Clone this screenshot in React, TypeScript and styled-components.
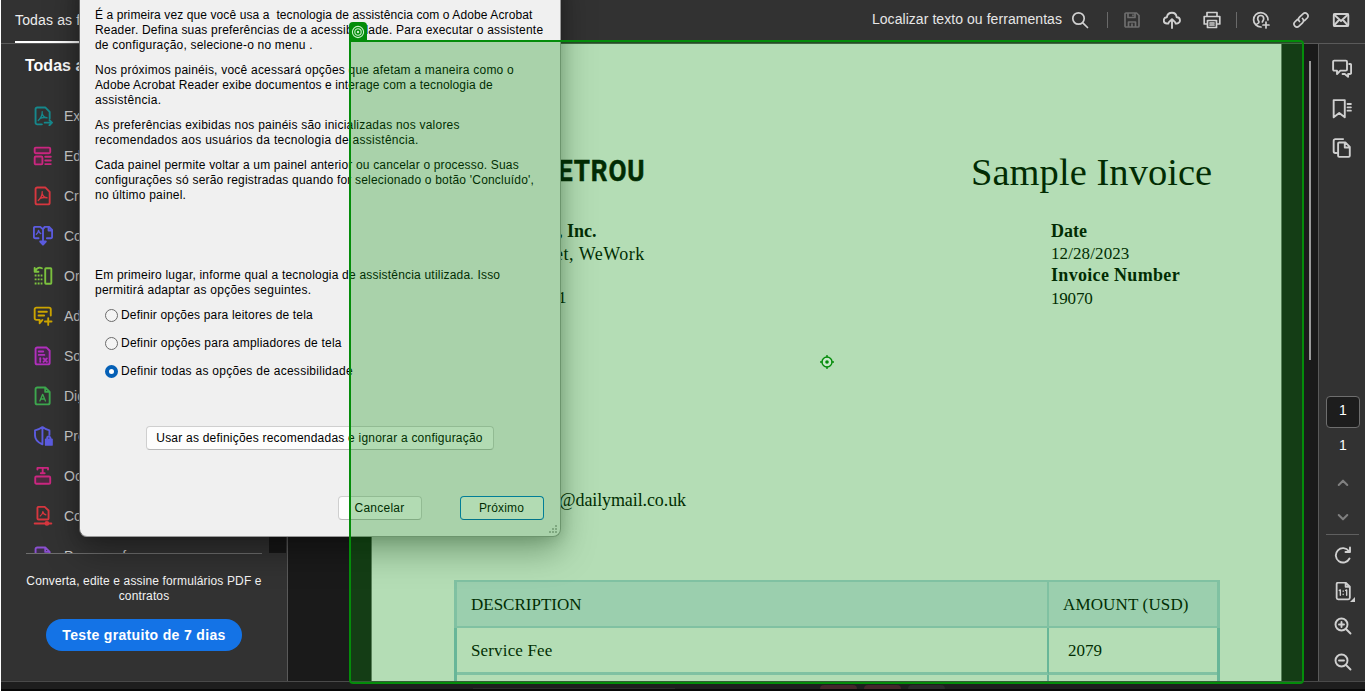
import React from 'react';
import styled, { createGlobalStyle } from 'styled-components';

const Global = createGlobalStyle`
  * { box-sizing: border-box; }
  body { margin: 0; background: #fff; overflow: hidden; font-family: "Liberation Sans", Arial, sans-serif; }
  p, h1, h2 { margin: 0; font-weight: normal; }
  button { font-family: inherit; padding: 0; }
`;

const Frame = styled.div`
  position: relative;
  width: 1364px;
  height: 691px;
  margin-left: 1px;
  overflow: hidden;
  display: flex;
  flex-direction: column;
  background: #1e1e1e;
`;

/* ---------- top bar ---------- */
const TopBar = styled.header`
  flex: 0 0 44px;
  display: flex;
  justify-content: space-between;
  background: #323232;
  border-bottom: 1px solid #5a5a5a;
`;
const Tab = styled.div`
  margin-left: 14px;
  width: 160px;
  height: 43px;
  padding-top: 11px;
  border-bottom: 2px solid #fff;
  color: #eee;
  font-size: 14px;
  line-height: 18px;
  letter-spacing: 0.15px;
  white-space: nowrap;
`;
const Tools = styled.div`
  display: flex;
  align-items: center;
  height: 40px;
  padding-right: 15px;
`;
const SearchLabel = styled.span`
  color: #e6e6e6;
  font-size: 14px;
  letter-spacing: 0.06px;
  margin-top: -2px;
  white-space: nowrap;
`;
const ToolIcon = styled.span<{ $gap: number; $dim?: boolean }>`
  display: flex;
  margin-left: ${p => p.$gap}px;
  color: ${p => (p.$dim ? '#6e6e6e' : '#d0d0d0')};
`;
const Separator = styled.i<{ $gap: number }>`
  width: 1px;
  height: 16px;
  margin-left: ${p => p.$gap}px;
  background: #6a6a6a;
`;

/* ---------- body ---------- */
const Body = styled.div`
  flex: 0 0 638px;
  display: flex;
  overflow: hidden;
  border-bottom: 1px solid #4a4a4a;
`;
const Sidebar = styled.aside`
  flex: 0 0 287px;
  display: flex;
  flex-direction: column;
  background: #323232;
  border-right: 1px solid #5a5a5a;
`;
const SideTitle = styled.h2`
  height: 52px;
  padding: 13px 0 0 24px;
  color: #fff;
  font-size: 16px;
  font-weight: bold;
  line-height: 18px;
`;
const ToolScroller = styled.div`
  display: flex;
  justify-content: space-between;
  height: 457px;
  padding-right: 1px;
  overflow: hidden;
`;
const ToolList = styled.div`
  width: 236px;
  margin-left: 25px;
`;
const ToolRow = styled.div`
  display: flex;
  align-items: center;
  height: 40px;
  padding-left: 7px;
  gap: 11px;
  color: #d0d0d0;
  font-size: 14px;
  white-space: nowrap;
`;
const ScrollTrack = styled.div`
  width: 17px;
  background: #171717;
`;
const Promo = styled.div`
  width: 236px;
  margin-left: 25px;
  border-top: 1px solid #6e6e6e;
  padding-top: 20px;
  display: flex;
  flex-direction: column;
  align-items: center;
  color: #f2f2f2;
  font-size: 12px;
  line-height: 15px;
  text-align: center;
`;
const PromoLine = styled.span`
  letter-spacing: 0.14px;
  white-space: nowrap;
`;
const TrialButton = styled.button`
  width: 196px;
  height: 32px;
  margin-top: 15px;
  border: 0;
  border-radius: 16px;
  background: #1473e6;
  color: #fff;
  font-size: 14px;
  font-weight: bold;
  line-height: 30px;
  letter-spacing: 0.33px;
`;

/* ---------- document ---------- */
const Viewer = styled.main`
  flex: 1;
  display: flex;
  justify-content: space-between;
  background: #1a1a1a;
`;
const Sheet = styled.article`
  width: 911px;
  margin-left: 83px;
  padding: 106px 61px 0 83px;
  border: solid #7a7a7a;
  border-width: 0 1px;
  background: #fff;
  color: #000;
  font-family: "Liberation Serif", "Times New Roman", serif;
  font-size: 17px;
  overflow: hidden;
`;
const SheetHead = styled.div`
  display: flex;
  justify-content: space-between;
  height: 70px;
  padding: 0 0 0 103px;
`;
const Brand = styled.h1`
  width: 100px;
  font: 700 30px/42px Roboto, sans-serif;
  letter-spacing: 1px;
  -webkit-text-stroke: 0.5px #000;
  transform: scaleX(0.87);
  transform-origin: left;
`;
const DocTitle = styled.h1`
  width: 249px;
  font-size: 38.5px;
  line-height: 44px;
  letter-spacing: 0.05px;
  white-space: nowrap;
`;
const Parties = styled.div`
  display: flex;
  justify-content: space-between;
  height: 262px;
`;
const Block = styled.div<{ $width: number; $left: number }>`
  width: ${p => p.$width}px;
  margin-left: ${p => p.$left}px;
`;
const Line = styled.p<{ $bold?: boolean; $indent?: number; $track?: number; $h?: number; $size?: number }>`
  height: ${p => p.$h ?? 22}px;
  line-height: 22px;
  padding-left: ${p => p.$indent ?? 0}px;
  letter-spacing: ${p => p.$track ?? 0}px;
  font-weight: ${p => (p.$bold ? 700 : 400)};
  font-size: ${p => p.$size ?? 17}px;
  white-space: nowrap;
`;
const Email = styled.p`
  height: 98px;
  padding: 7px 0 0 104px;
  font-size: 18px;
  line-height: 22px;
  letter-spacing: -0.1px;
`;
const Table = styled.div`
  width: 766px;
  margin-left: -1px;
`;
const TableRow = styled.div<{ $head?: boolean }>`
  display: grid;
  grid-template-columns: 592px 168px;
  height: ${p => (p.$head ? 48 : 47)}px;
  background: ${p => (p.$head ? '#dbebf5' : '#fff')};
  border: solid ${p => (p.$head ? '#b5d7e4' : '#93c7d6')};
  border-width: ${p => (p.$head ? '2px 3px 0 3px' : '0 3px')};
`;
const Cell = styled.div<{ $left: number; $track?: number; $head?: boolean }>`
  display: flex;
  align-items: center;
  padding-left: ${p => p.$left}px;
  padding-top: 1px;
  letter-spacing: ${p => p.$track ?? 0}px;
  border-bottom: ${p => (p.$head ? 2 : 3)}px solid #b5d7e4;
  &:first-child { border-right: 2px solid ${p => (p.$head ? '#b5d7e4' : '#93c7d6')}; }
`;
const PageScroll = styled.div`
  width: 2px;
  height: 299px;
  margin: 17px 7px 0 0;
  background: #9a9a9a;
`;

/* ---------- right rail ---------- */
const Rail = styled.nav`
  flex: 0 0 47px;
  display: flex;
  flex-direction: column;
  align-items: center;
  background: #323232;
  border-left: 1px solid #5a5a5a;
  color: #d0d0d0;
`;
const RailIcon = styled.span<{ $h: number; $dim?: boolean; $shift?: boolean; $menu?: boolean }>`
  position: relative;
  display: flex;
  flex-shrink: 0;
  align-items: center;
  justify-content: center;
  width: 24px;
  height: ${p => p.$h}px;
  margin-left: ${p => (p.$shift ? 2 : 0)}px;
  color: ${p => (p.$dim ? '#808080' : '#d0d0d0')};
  &::after {
    content: '';
    display: ${p => (p.$menu ? 'block' : 'none')};
    position: absolute;
    right: 0;
    bottom: 6px;
    border: solid transparent;
    border-width: 0 0 5px 5px;
    border-bottom-color: #d0d0d0;
  }
`;
const PageBox = styled.div`
  flex-shrink: 0;
  width: 34px;
  height: 32px;
  margin: 224px 0 0 2px;
  border: 1px solid #6e6e6e;
  border-radius: 4px;
  background: #1d1d1d;
  color: #fff;
  font-size: 14px;
  line-height: 27px;
  text-align: center;
`;
const PageTotal = styled.div`
  flex-shrink: 0;
  height: 38px;
  padding: 9px 0 0 2px;
  color: #fff;
  font-size: 14px;
  line-height: 16px;
`;
const RailRule = styled.i`
  flex-shrink: 0;
  width: 33px;
  height: 1px;
  background: #5f5f5f;
`;

/* ---------- bottom strip ---------- */
const Strip = styled.footer`
  flex: 1;
  display: flex;
  align-items: flex-end;
  gap: 4px;
  padding-left: 472px;
  border-bottom: 2px solid #080808;
`;
const StripField = styled.i`
  width: 202px;
  height: 1px;
  margin-right: 141px;
  background: #2c2c2c;
`;
const StripTab = styled.i<{ $red?: boolean }>`
  width: 37px;
  height: 4px;
  margin-right: ${p => (p.$red ? 3 : 0)}px;
  border-radius: 4px 4px 0 0;
  background: ${p => (p.$red ? '#44262a' : '#2a2a2b')};
`;

/* ---------- dialog ---------- */
const Dialog = styled.section`
  position: absolute;
  left: 78px;
  top: -30px;
  width: 482px;
  height: 567px;
  padding: 38px 0 0 15px;
  background: #f0f0f0;
  border: 1px solid #999;
  border-top: 0;
  border-left-color: #606060;
  border-radius: 0 0 8px 8px;
  box-shadow: 0 14px 34px rgba(0, 0, 0, 0.36), 0 2px 14px rgba(0, 0, 0, 0.14);
  color: #000;
  font-size: 12px;
  line-height: 15px;
`;
const Para = styled.div<{ $after: number }>`
  margin-bottom: ${p => p.$after}px;
`;
const Text = styled.p<{ $track: number }>`
  letter-spacing: ${p => p.$track}px;
  white-space: pre;
`;
const Option = styled.label`
  display: flex;
  align-items: center;
  gap: 3px;
  height: 28px;
  padding-left: 10px;
`;
const Radio = styled.i<{ $on?: boolean }>`
  width: 13px;
  height: 13px;
  border-radius: 50%;
  border: ${p => (p.$on ? '4px solid #0560b6' : '1px solid #6b6b6b')};
  background: ${p => (p.$on ? '#fff' : '#f4f4f4')};
`;
const DialogButton = styled.button<{ $w: number; $primary?: boolean; $track?: number }>`
  width: ${p => p.$w}px;
  height: 24px;
  border: 1px solid ${p => (p.$primary ? '#0078d4' : '#cfcfcf')};
  border-bottom-color: ${p => (p.$primary ? '#0067c0' : '#b8b8b8')};
  border-radius: 4px;
  background: #fdfdfd;
  color: #000;
  font-size: 12px;
  letter-spacing: ${p => p.$track ?? 0}px;
  padding-right: 1px;
  white-space: nowrap;
`;
const Skip = styled.div`
  margin: 41px 0 46px 51px;
  display: flex;
`;
const Actions = styled.div`
  display: flex;
  gap: 38px;
  margin-left: 243px;
`;
const Grip = styled.svg`
  position: absolute;
  right: 3px;
  bottom: 2px;
`;

/* ---------- highlight ---------- */
const Highlight = styled.div`
  position: absolute;
  left: 348px;
  top: 40px;
  width: 955px;
  height: 644px;
  display: flex;
  align-items: center;
  justify-content: center;
  border: 2px solid #048c0a;
  border-radius: 0 4px 4px 4px;
  background: rgba(6, 143, 10, 0.3);
  background-clip: padding-box;
`;
const Badge = styled.div`
  position: absolute;
  left: 348px;
  top: 22px;
  width: 18px;
  height: 19px;
  display: flex;
  align-items: center;
  justify-content: center;
  border-radius: 4px 4px 0 0;
  background: #048c0a;
`;

type IconProps = { size?: number; sw?: number; color?: string; children: React.ReactNode };
const Icon = ({ size = 18, sw = 1.7, color = 'currentColor', children }: IconProps) => (
  <svg width={size} height={size} viewBox="0 0 18 18" fill="none" stroke={color} strokeWidth={sw} strokeLinejoin="round" strokeLinecap="round">
    {children}
  </svg>
);

const acro = 'M8.300 5c.1 3-1.300 6.200-3.600 8M8.300 7c.5 2 2 3.400 4.300 3.600M6.300 11.200c1.800-.8 4-1.100 6.300-.6';

const tools = [
  { label: 'Ex', color: '#16888c', icon: <><path d="M8 16.500H3.800a1.500 1.500 0 0 1-1.500-1.500V2.800A1.500 1.500 0 0 1 3.800 1.300H11l4 4v6" /><path d={acro} strokeWidth="1.200" /><path d="M10.500 15h6.500M14.800 12.700l2.300 2.300l-2.300 2.300" /></> },
  { label: 'Ed', color: '#cb2780', icon: <><rect x="1.500" y="1.500" width="14" height="5" rx="1" fill="#4d2b40" /><rect x="1.500" y="9.500" width="7" height="7" rx="1" fill="#4d2b40" /><path d="M11 9.700h5M11 13h5M11 16.300h5" /></> },
  { label: 'Cr', color: '#d7373f', icon: <><path d="M11 1.300H3.800a1.500 1.500 0 0 0-1.500 1.500v12.200A1.500 1.500 0 0 0 3.800 16.500h9.700a1.500 1.500 0 0 0 1.500-1.500V5.300z" /><path d={acro} strokeWidth="1.200" /></> },
  { label: 'Co', color: '#5c5ce0', icon: <><path d="M5 11H2a1.200 1.200 0 0 1-1.200-1.200V2A1.200 1.200 0 0 1 2 .8h4.500L9 3v10M12.500 11H16a1.200 1.200 0 0 0 1.200-1.200V3.500L14.500.8h-4L9 3M14 1v3h3" /><path d="M3 7.500c1.200-1 1.800-2 2-3.500c.4 1.600 1 2.300 2 2.800" strokeWidth="1.200" /><path d="M6.500 14L9 16.800l2.500-2.800z" fill="#5c5ce0" /></> },
  { label: 'Or', color: '#7cc33f', icon: <><rect x="11" y="2" width="5.500" height="14" rx=".6" /><path d="M2 4.500C3.500 1.500 6 1 8 2M1.500 1.800v3.400h3.400" /><path d="M1.500 8.500h7M1.500 12h7M1.500 15.800h7" strokeDasharray="1.700 1" strokeLinecap="butt" /></> },
  { label: 'Ad', color: '#cca400', icon: <><path d="M8.500 12.500L6 15.500v-3H3A1.500 1.500 0 0 1 1.500 11V3A1.500 1.500 0 0 1 3 1.500h11.500A1.500 1.500 0 0 1 16 3v5.500M5 5.200h7.500M5 8.500h5M13.700 11v6M10.700 14h6" /></> },
  { label: 'So', color: '#b130bd', icon: <><path d="M12 1.300H3.800a1.500 1.500 0 0 0-1.500 1.500v12.200A1.500 1.500 0 0 0 3.800 16.500h9.700a1.500 1.500 0 0 0 1.500-1.500V4.300z" fill="#45294a" /><path d="M5.200 5h4M5.200 8h5M6.500 11v1.500M6.500 14v.2M9.500 11.200l3 3M12.500 11.200l-3 3" /></> },
  { label: 'Dig', color: '#3da74e', icon: <><path d="M11 1.300H3.800a1.500 1.500 0 0 0-1.500 1.500v12.200A1.500 1.500 0 0 0 3.800 16.500h9.700a1.500 1.500 0 0 0 1.500-1.500V5.300zM11 1.300v4h4" /><path d="M6.200 13.500l2.500-6L11.200 13.500M7 11.700h3.400" strokeWidth="1.200" /></> },
  { label: 'Pro', color: '#5c5ce0', icon: <><path d="M8.500 1v15.500C4 14.500 1.800 12 1.800 8.500V4C4.500 3.500 6.500 2.500 8.500 1c2 1.500 4 2.500 6.300 3v4" /><rect x="11.500" y="12" width="5.500" height="5" fill="#5c5ce0" /><path d="M12.700 12v-1a1.500 1.500 0 0 1 3 0v1" /></> },
  { label: 'Oc', color: '#cb2780', icon: <><rect x="2" y="9.500" width="13.500" height="6.500" rx="1" fill="#4d2b40" /><path d="M4 3.200V1.700h9.500v1.500M8.700 1.700V6.500M7 6.500h3.500" /></> },
  { label: 'Co', color: '#d7373f', icon: <><path d="M10.500 .8H5a1 1 0 0 0-1 1v9.400a1 1 0 0 0 1 1h8a1 1 0 0 0 1-1V4z" /><path d="M6.500 9c1.500-.8 2.300-2.200 2.400-4c.3 1.800 1 2.600 2.600 2.900" strokeWidth="1.200" /><path d="M1.500 15.700h15" /><circle cx="12.500" cy="15.700" r="1.300" fill="#d7373f" /></> },
  { label: 'Preparar f...', color: '#8b50d0', icon: <><path d="M8 17H3.800a1.500 1.500 0 0 1-1.500-1.500V2.800A1.500 1.500 0 0 1 3.800 1.300H11l4 4v12zM11 1.300v4h4" fill="#3c2f48" /></> },
];

const paragraphs: { after: number; lines: [string, number][] }[] = [
  { after: 10, lines: [['É a primeira vez que você usa a  tecnologia de assistência com o Adobe Acrobat', 0.1], ['Reader. Defina suas preferências de a acessibilidade. Para executar o assistente', 0.2], ['de configuração, selecione-o no menu .', 0.2]] },
  { after: 10, lines: [['Nos próximos painéis, você acessará opções que afetam a maneira como o', 0.22], ['Adobe Acrobat Reader exibe documentos e interage com a tecnologia de', 0.12], ['assistência.', 0.3]] },
  { after: 10, lines: [['As preferências exibidas nos painéis são inicializadas nos valores', 0.22], ['recomendados aos usuários da tecnologia de assistência.', 0.28]] },
  { after: 65, lines: [['Cada painel permite voltar a um painel anterior ou cancelar o processo. Suas', 0.17], ["configurações só serão registradas quando for selecionado o botão 'Concluído',", 0.2], ['no último painel.', 0.22]] },
  { after: 3, lines: [['Em primeiro lugar, informe qual a tecnologia de assistência utilizada. Isso', 0.2], ['permitirá adaptar as opções seguintes.', 0.25]] },
];

export default function App() {
  return (
    <>
      <Global />
      <Frame>
        <TopBar>
          <Tab>Todas as f</Tab>
          <Tools>
            <SearchLabel>Localizar texto ou ferramentas</SearchLabel>
            <ToolIcon $gap={9}><Icon><circle cx="7.500" cy="7.500" r="5.700" /><path d="M11.800 11.800L16.500 16.500" /></Icon></ToolIcon>
            <Separator $gap={18} />
            <ToolIcon $gap={15} $dim><Icon><path d="M2 3a1 1 0 0 1 1-1h10.500L16 4.500V15a1 1 0 0 1-1 1H3a1 1 0 0 1-1-1zM5 2v4.500h7V2M5.500 16v-5h7v5M10 4v.5M9 13v3" /></Icon></ToolIcon>
            <ToolIcon $gap={22}><Icon sw={1.9}><path d="M5.500 12.500H4A3.100 3.100 0 0 1 3.800 6.300C4.300 3.300 6.500 1.800 9 1.800s4.300 1.500 4.700 4.500A3.100 3.100 0 0 1 14 12.500h-1.500M9 17V8.500M6 11.200l3-3l3 3" /></Icon></ToolIcon>
            <ToolIcon $gap={22}><Icon><path d="M4 5V1.500h10V5M4 13H1.200V5.500h15.600V13H14M4.500 9.500h9v7h-9zM7 12h4M7 14h4" /></Icon></ToolIcon>
            <Separator $gap={15} />
            <ToolIcon $gap={15}><Icon><path d="M9 16A7.200 7.200 0 1 1 16 9M4 14c1-1.500 3-1.500 3-3c0-.8-1.300-1.500-1.300-3.300C5.700 5.500 7 4.500 8.700 4.500s3 1 3 3.200C11.700 9.500 10.400 10.200 10.400 11M14 11v6M11 14h6" /></Icon></ToolIcon>
            <ToolIcon $gap={22}><Icon><path d="M7.500 10.500C6 9 6.200 7.500 7.500 6.200L11 2.800c2.800-2.500 6.700 1.300 4.200 4.200L12.500 9.700M10.500 7.500c1.500 1.500 1.300 3 0 4.300L7 15.200c-2.800 2.500-6.700-1.300-4.200-4.200L5.500 8.300" /></Icon></ToolIcon>
            <ToolIcon $gap={22}><Icon sw={1.9}><rect x="1.800" y="3" width="14.500" height="12" rx="1" /><path d="M2 3.500L9 10l7-6.500M2 14.500l5-5.500M16 14.500l-5-5.500" /></Icon></ToolIcon>
          </Tools>
        </TopBar>

        <Body>
          <Sidebar>
            <SideTitle>Todas a</SideTitle>
            <ToolScroller>
              <ToolList>
                {tools.map((t, i) => (
                  <ToolRow key={i}>
                    <Icon size={20} color={t.color}>{t.icon}</Icon>
                    {t.label}
                  </ToolRow>
                ))}
              </ToolList>
              <ScrollTrack />
            </ToolScroller>
            <Promo>
              <PromoLine>Converta, edite e assine formulários PDF e</PromoLine>
              <PromoLine>contratos</PromoLine>
              <TrialButton>Teste gratuito de 7 dias</TrialButton>
            </Promo>
          </Sidebar>

          <Viewer>
            <Sheet>
              <SheetHead>
                <Brand>ETROU</Brand>
                <DocTitle>Sample Invoice</DocTitle>
              </SheetHead>
              <Parties>
                <Block $width={140} $left={99}>
                  <Line $bold $size={18} $h={23} $indent={4}>, Inc.</Line>
                  <Line $size={18} $track={0.5} $h={44} $indent={1}>et, WeWork</Line>
                  <Line $indent={4}>1</Line>
                </Block>
                <Block $width={169} $left={0}>
                  <Line $bold $size={18} $h={23}>Date</Line>
                  <Line $h={21} $track={0.1}>12/28/2023</Line>
                  <Line $bold $size={18} $h={24} $track={0.32}>Invoice Number</Line>
                  <Line $track={-0.2}>19070</Line>
                </Block>
              </Parties>
              <Email>@dailymail.co.uk</Email>
              <Table>
                <TableRow $head><Cell $head $left={14}>DESCRIPTION</Cell><Cell $head $left={14} $track={0.15}>AMOUNT (USD)</Cell></TableRow>
                <TableRow><Cell $left={14} $track={0.15}>Service Fee</Cell><Cell $left={19}>2079</Cell></TableRow>
                <TableRow><Cell $left={14} /><Cell $left={19} /></TableRow>
              </Table>
            </Sheet>
            <PageScroll />
          </Viewer>

          <Rail>
            <RailIcon $h={50}><Icon size={20}><path d="M2 1.500h10.500a1 1 0 0 1 1 1v7a1 1 0 0 1-1 1H7.500L4.500 13.500v-3H2a1 1 0 0 1-1-1v-7a1 1 0 0 1 1-1zM15.500 4.500h.7a1 1 0 0 1 1 1v7a1 1 0 0 1-1 1H14.500V16L11.500 13.500H9.500" /></Icon></RailIcon>
            <RailIcon $h={29}><Icon size={20}><path d="M1.500 1h10v15.500L6.500 12.500L1.500 16.500zM14 4.500h3M14 7.500h3M14 10.500h3" /></Icon></RailIcon>
            <RailIcon $h={49}><Icon size={20}><path d="M4 13.500H3a1.500 1.500 0 0 1-1.500-1.500V2.500A1.500 1.500 0 0 1 3 1H10M6.500 4H12l4 4v8a1 1 0 0 1-1 1H6.500a1 1 0 0 1-1-1V5a1 1 0 0 1 1-1zM11.500 4.500V8.500H16" /></Icon></RailIcon>
            <PageBox>1</PageBox>
            <PageTotal>1</PageTotal>
            <RailIcon $shift $h={34} $dim><Icon size={14} sw={2.6}><path d="M3.500 11.500L9 6l5.500 5.500" /></Icon></RailIcon>
            <RailIcon $shift $h={34} $dim><Icon size={14} sw={2.6}><path d="M3.500 6.500L9 12l5.500-5.500" /></Icon></RailIcon>
            <RailRule />
            <RailIcon $shift $h={39}><Icon sw={1.9}><path d="M15.500 12.500A7.200 7.200 0 1 1 14.800 5M16 1.500V6h-4.500" /></Icon></RailIcon>
            <RailIcon $shift $menu $h={34}><Icon size={19}><path d="M11 .5H4A1.500 1.500 0 0 0 2.500 2v13A1.500 1.500 0 0 0 4 16.500h9.500A1.500 1.500 0 0 0 15 15V4.500zM11 .5v4h4" /><path d="M5 8l1-.5v5M11 8l1-.5v5M8.700 8.500v.3M8.700 11.500v.3" strokeWidth="1.300" /></Icon></RailIcon>
            <RailIcon $shift $h={36}><Icon sw={1.9}><circle cx="7.500" cy="7.500" r="6" /><path d="M12 12L16.500 16.500M5 7.500h5M7.500 5v5" /></Icon></RailIcon>
            <RailIcon $shift $h={36}><Icon sw={1.9}><circle cx="7.500" cy="7.500" r="6" /><path d="M12 12L16.500 16.500M5 7.500h5" /></Icon></RailIcon>
          </Rail>
        </Body>

        <Strip>
          <StripField />
          <StripTab $red />
          <StripTab $red />
          <StripTab />
        </Strip>

        <Dialog>
          {paragraphs.map((p, i) => (
            <Para key={i} $after={p.after}>
              {p.lines.map(([text, track]) => <Text key={text} $track={track}>{text}</Text>)}
            </Para>
          ))}
          <Option><Radio /><Text $track={0.18}>Definir opções para leitores de tela</Text></Option>
          <Option><Radio /><Text $track={0.22}>Definir opções para ampliadores de tela</Text></Option>
          <Option><Radio $on /><Text $track={0.27}>Definir todas as opções de acessibilidade</Text></Option>
          <Skip><DialogButton $w={348} $track={0.22}>Usar as definições recomendadas e ignorar a configuração</DialogButton></Skip>
          <Actions>
            <DialogButton $w={84} $track={0.25}>Cancelar</DialogButton>
            <DialogButton $w={84} $track={0.15} $primary>Próximo</DialogButton>
          </Actions>
          <Grip width="9" height="9" fill="#b4b4b4">
            <path d="M7 0h2v2h-2zM4 3h2v2h-2zM7 3h2v2h-2zM1 6h2v2h-2zM4 6h2v2h-2zM7 6h2v2h-2z" />
          </Grip>
        </Dialog>

        <Highlight>
          <svg width="14" height="14" fill="none" stroke="#048c0a" strokeWidth="1.400">
            <circle cx="7" cy="7" r="5" fill="#c8e8ca" /><circle cx="7" cy="7" r="1.800" fill="#048c0a" stroke="none" />
            <path d="M7 0v2.500M7 11.500V14M0 7h2.500M11.500 7H14" />
          </svg>
        </Highlight>
        <Badge>
          <svg width="14" height="14" fill="none" stroke="#c8f0c8" strokeWidth="1.100">
            <circle cx="7" cy="7" r="5.600" /><circle cx="7" cy="7" r="3.200" /><circle cx="7" cy="7" r="1.200" fill="#c8f0c8" stroke="none" />
          </svg>
        </Badge>
      </Frame>
    </>
  );
}
